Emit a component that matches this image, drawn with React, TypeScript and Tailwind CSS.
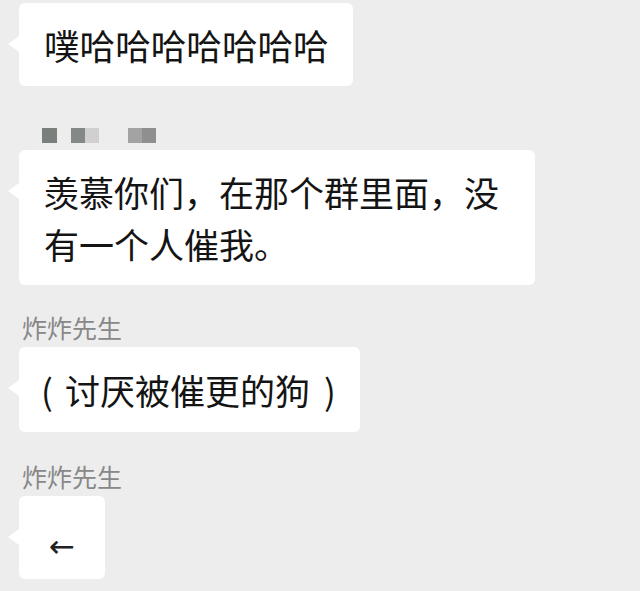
import React from "react";

const font = { fontFamily: '"Noto Sans CJK SC", "Noto Sans", sans-serif' };

function Tail() {
  return (
    <span className="absolute left-[-11px] top-[33px] h-0 w-0 border-y-[8px] border-r-[11px] border-y-transparent border-r-white" />
  );
}

export default function App() {
  return (
    <div
      className="w-[640px] h-[591px] overflow-hidden bg-[#ededed] pl-[19px] pt-[3px] text-[#141414]"
      style={font}
    >
      <div className="flex flex-col items-start">
        {/* bubble 1 */}
        <div className="relative w-[334px] rounded-md bg-white pl-[25px] py-[15.5px] text-[35.6px] leading-[52px] whitespace-nowrap">
          <Tail />
          噗哈哈哈哈哈哈哈
        </div>

        {/* blurred name */}
        <div className="mt-[42px] flex h-[15px] items-stretch">
          <span className="ml-[23px] w-[15px] bg-[#7b7f7b]" />
          <span className="ml-[14px] w-[14px] bg-[#858985]" />
          <span className="w-[14px] bg-[#cfd0cf]" />
          <span className="ml-[29px] w-[14px] bg-[#a3a3a3]" />
          <span className="w-[14px] bg-[#8f8f8f]" />
        </div>

        {/* bubble 2 */}
        <div className="relative mt-[7px] w-[516px] rounded-md bg-white pl-[25px] py-[15.5px] text-[35px] leading-[52px] whitespace-nowrap">
          <Tail />
          羡慕你们，在那个群里面，没
          <br />
          有一个人催我。
        </div>

        {/* name 3 */}
        <div className="mt-[30px] pl-[3px] text-[25px] leading-[24px] text-[#888888] whitespace-nowrap">
          炸炸先生
        </div>

        {/* bubble 3 */}
        <div className="relative mt-[8px] flex w-[341px] items-center rounded-md bg-white pl-[18px] py-[16.5px] text-[35px] leading-[52px] whitespace-nowrap">
          <Tail />
          <span className="inline-block w-[20px] text-center">(</span>
          <span className="ml-[8px]">讨厌被催更的狗</span>
          <span className="ml-[10px] inline-block w-[20px] text-center">)</span>
        </div>

        {/* name 4 */}
        <div className="mt-[32px] pl-[3px] text-[25px] leading-[24px] text-[#888888] whitespace-nowrap">
          炸炸先生
        </div>

        {/* bubble 4 */}
        <div
          className="relative mt-[8px] flex h-[83px] w-[86px] items-center justify-center rounded-md bg-white pt-[18px] text-[31px] text-[#222]"
          style={{ fontFamily: '"DejaVu Sans", sans-serif' }}
        >
          <Tail />
          ←
        </div>
      </div>
    </div>
  );
}
